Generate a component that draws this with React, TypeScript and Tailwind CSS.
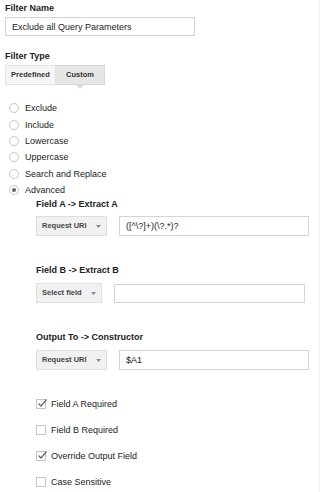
import React from "react";

function Radio({ label, checked }: { label: string; checked?: boolean }) {
  return (
    <div className="flex h-[16.4px] items-center">
      <div className="ml-[4px] flex h-[10px] w-[10px] items-center justify-center rounded-full border border-[#c8c8c8] bg-white">
        {checked && <div className="h-[4px] w-[4px] rounded-full bg-[#666]" />}
      </div>
      <span className="ml-[6px] text-[9px] leading-[10px] text-[#222]">{label}</span>
    </div>
  );
}

function Check({ label, checked }: { label: string; checked?: boolean }) {
  return (
    <div className="flex h-[26px] items-center">
      <div className="relative h-[10px] w-[10px] border border-[#c4c4c4] bg-white">
        {checked && (
          <svg className="absolute left-[0px] top-[-2px]" width="11" height="10" viewBox="0 0 11 10">
            <path d="M1.5 5.5 L4 8 L9.5 1.5" fill="none" stroke="#666" strokeWidth="1.2" />
          </svg>
        )}
      </div>
      <span className="ml-[5px] text-[9px] leading-[10px] text-[#222]">{label}</span>
    </div>
  );
}

function SelectBtn({ label, w }: { label: string; w: string }) {
  return (
    <div
      className={`flex h-[20px] items-center justify-between border border-[#e0e0e0] bg-[#f1f1f1] pl-[5px] pr-[5px] ${w}`}
    >
      <span className="text-[7.5px] font-bold leading-[8px] text-[#444]">{label}</span>
      <svg width="5" height="3" viewBox="0 0 5 3">
        <path d="M0 0 L5 0 L2.5 3 Z" fill="#888" />
      </svg>
    </div>
  );
}

export default function App() {
  return (
    <div
      className="min-h-[492px] w-[320px] border-r border-[#f2f2f2] bg-white pl-[5px] pt-[3px] text-[#222]"
      style={{ fontFamily: '"Liberation Sans", Arial, sans-serif' }}
    >
      <div className="text-[9px] font-bold leading-[10px]">Filter Name</div>
      <div className="mt-[4px] flex h-[19px] w-[190px] items-center border border-[#d4d4d4] pl-[6px] text-[9px] leading-[10px]">
        Exclude all Query Parameters
      </div>

      <div className="mt-[15px] text-[9px] font-bold leading-[10px]">Filter Type</div>
      <div className="mt-[4px] flex h-[20px] w-[100px]">
        <div className="flex w-[51px] items-center justify-center border border-[#e2e2e2] bg-[#f5f5f5] text-[7.5px] font-bold text-[#333]">
          Predefined
        </div>
        <div className="relative flex w-[49px] items-center justify-center border border-l-0 border-[#d8d8d8] bg-[#e6e6e6] text-[7.5px] font-bold text-[#333]">
          Custom
          <div className="absolute bottom-[-5px] left-[20px] h-0 w-0 border-l-[4px] border-r-[4px] border-t-[4px] border-l-transparent border-r-transparent border-t-[#d8d8d8]" />
        </div>
      </div>

      <div className="mt-[15px]">
        <Radio label="Exclude" />
        <Radio label="Include" />
        <Radio label="Lowercase" />
        <Radio label="Uppercase" />
        <Radio label="Search and Replace" />
        <Radio label="Advanced" checked />
      </div>

      <div className="ml-[31px]">
        <div className="mt-[1px] text-[9px] font-bold leading-[10px]">Field A -&gt; Extract A</div>
        <div className="mt-[7px] flex items-center gap-[12px]">
          <SelectBtn label="Request URI" w="w-[71px]" />
          <div className="flex h-[20px] w-[190px] items-center border border-[#d4d4d4] pl-[6px] text-[9px] leading-[10px]">
            ([^\?]+)(\?.*)?
          </div>
        </div>

        <div className="mt-[29px] text-[9px] font-bold leading-[10px]">Field B -&gt; Extract B</div>
        <div className="mt-[8px] flex items-center gap-[12px]">
          <SelectBtn label="Select field" w="w-[66px]" />
          <div className="h-[19px] w-[191px] border border-[#d4d4d4]" />
        </div>

        <div className="mt-[29px] text-[9px] font-bold leading-[10px]">Output To -&gt; Constructor</div>
        <div className="mt-[8px] flex items-center gap-[12px]">
          <SelectBtn label="Request URI" w="w-[71px]" />
          <div className="flex h-[20px] w-[190px] items-center border border-[#d4d4d4] pl-[6px] text-[9px] leading-[10px]">
            $A1
          </div>
        </div>

        <div className="mt-[21px]">
          <Check label="Field A Required" checked />
          <Check label="Field B Required" />
          <Check label="Override Output Field" checked />
          <Check label="Case Sensitive" />
        </div>
      </div>
    </div>
  );
}
